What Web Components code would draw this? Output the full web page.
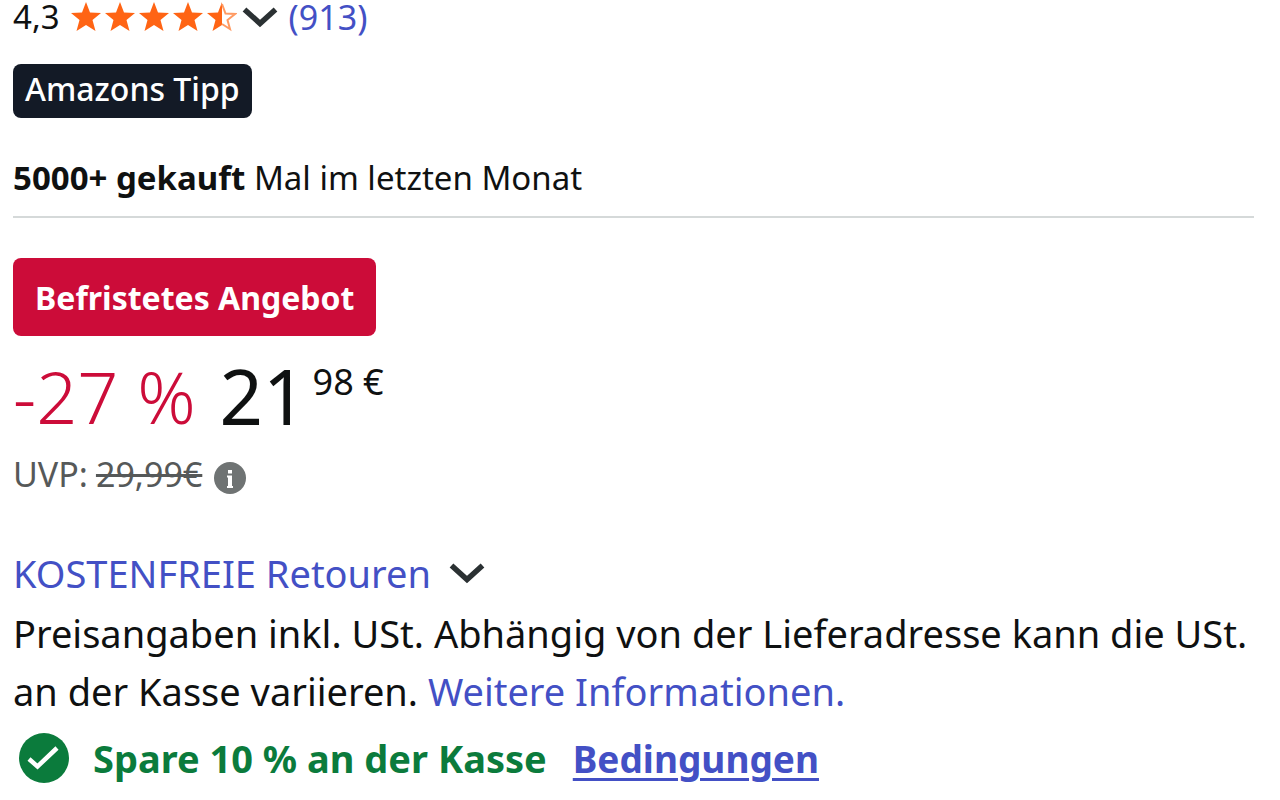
<!DOCTYPE html>
<html lang="de">
<head>
<meta charset="utf-8">
<meta name="viewport" content="width=device-width, initial-scale=1">
<title>Produktangebot</title>
<style>
  body { margin: 0; background: #fff; color: #0f1111; font-family: "Noto Sans", "Open Sans", sans-serif; }
</style>
</head>
<body>
<product-offer></product-offer>
<script>
const define = (name, html) => {
  const template = document.createElement('template');
  template.innerHTML = html;
  customElements.define(name, class extends HTMLElement {
    constructor() {
      super();
      this.attachShadow({ mode: 'open' }).append(template.content.cloneNode(true));
    }
  });
};

define('chevron-icon', `
  <style>
    :host { display: inline-flex; }
    svg { width: 36px; height: 22px; display: block; }
  </style>
  <svg viewBox="0 0 36 22" aria-hidden="true"><path d="M2.500 3.500L18 17.500L33.500 3.500" fill="none" stroke="#2b3133" stroke-width="5.500"/></svg>`);

define('star-rating', `
  <style>
    :host { display: flex; align-items: center; height: 34px; font-size: 33px; line-height: 34px; }
    .stars { width: 166px; height: 32px; margin-left: 11px; }
    button { display: flex; align-items: center; padding: 0; border: 0; background: none; font: inherit; color: inherit; }
    chevron-icon { margin-left: 5px; }
    a { margin-left: 11px; color: #4350c5; font-size: 34px; text-decoration: none; }
  </style>
  <button type="button" aria-label="4,3 von 5 Sternen">
    <span>4,3</span>
    <svg class="stars" viewBox="0 0 166 32">
      <defs>
        <path id="star" d="M15 1L19 11.500L30 12L21.500 19L24.500 30L15 24L5.500 30L8.500 19L0 12L11 11.500Z"/>
      </defs>
      <g fill="#ff6414">
        <use href="#star"/><use href="#star" x="34"/><use href="#star" x="68"/><use href="#star" x="102"/>
        <path d="M151 1V24L141.500 30L144.500 19L136 12L147 11.500Z"/>
      </g>
      <path d="M151 3L154.500 12.500L164 13L156.500 19L159 28L151 23" fill="none" stroke="#ff9a62" stroke-width="2"/>
    </svg>
    <chevron-icon></chevron-icon>
  </button>
  <a href="#reviews"><slot></slot></a>`);

define('offer-badge', `
  <style>
    :host { display: flex; width: fit-content; box-sizing: border-box; border-radius: 8px; color: #fff; white-space: nowrap; }
    :host([kind="tip"]) { height: 54px; padding: 0 12px; background: #131a26; font-size: 32px; line-height: 50px; font-weight: 500; }
    :host([kind="deal"]) { height: 78px; padding: 0 22px; background: #cc0c39; font-size: 32px; line-height: 80px; font-weight: 700; }
  </style>
  <slot></slot>`);

define('price-block', `
  <style>
    :host { display: block; }
    .price { display: flex; height: 76px; line-height: 76px; }
    .saving { color: #cc0c39; font-size: 72px; font-weight: 300; }
    .whole { margin-left: 24px; font-size: 76px; }
    .cents { margin-left: 6px; font-size: 36px; line-height: 48px; }
    .list { display: flex; align-items: center; height: 48px; margin-top: 16px; color: #565959; font-size: 34px; }
    s { margin-left: 8px; text-decoration-thickness: 3px; }
    button { display: flex; margin: 8px 0 0 12px; padding: 0; border: 0; background: none; }
    svg { width: 32px; height: 32px; }
  </style>
  <div class="price">
    <span class="saving">-27 %</span><span class="whole">21</span><span class="cents">98 €</span>
  </div>
  <div class="list">
    <span>UVP:</span><s>29,99€</s>
    <button type="button" aria-label="Information zur UVP">
      <svg viewBox="0 0 32 32"><circle cx="16" cy="16" r="16" fill="#6f7373"/><path d="M14 8h4v3.500h-4zM13 13.500H18V24h1v2h-6v-2h1v-8.500h-1z" fill="#fff"/></svg>
    </button>
  </div>`);

define('coupon-line', `
  <style>
    :host { display: flex; align-items: center; height: 56px; padding-left: 6px; font-size: 38px; font-weight: 700; white-space: nowrap; }
    svg { width: 50px; height: 50px; margin-right: 24px; }
    .text { color: #0b7b3c; }
    a { margin-left: 26px; color: #4350c5; font-size: 37px; text-decoration-thickness: 3px; text-underline-offset: 5px; }
  </style>
  <svg viewBox="0 0 50 50" aria-hidden="true"><circle cx="25" cy="25" r="25" fill="#0b7b3c"/><path d="M10 26L18.500 33.500L38 15" fill="none" stroke="#fff" stroke-width="4.500"/></svg>
  <span class="text"><slot></slot></span>
  <a href="#terms">Bedingungen</a>`);

define('product-offer', `
  <style>
    :host { display: block; padding: 0 26px 10px 13px; }
    offer-badge[kind="tip"] { margin-top: 30px; }
    .bought { margin: 36px 0 0; font-size: 33px; line-height: 48px; }
    hr { margin: 14px 0 40px; border: 0; border-top: 2px solid #d5d9d9; }
    price-block { margin-top: 22px; }
    .returns { display: flex; align-items: center; gap: 18px; height: 58px; margin-top: 46px; font-size: 38px; }
    a { color: #4350c5; text-decoration: none; }
    .tax { margin: 2px -13px 10px 0; font-size: 38px; line-height: 58px; }
  </style>
  <star-rating>(913)</star-rating>
  <offer-badge kind="tip">Amazons Tipp</offer-badge>
  <p class="bought"><b>5000+ gekauft</b> Mal im letzten Monat</p>
  <hr>
  <offer-badge kind="deal">Befristetes Angebot</offer-badge>
  <price-block></price-block>
  <div class="returns"><a href="#returns">KOSTENFREIE Retouren</a><chevron-icon></chevron-icon></div>
  <p class="tax">Preisangaben inkl. USt. Abhängig von der Lieferadresse kann die USt. an der Kasse variieren. <a href="#info">Weitere Informationen.</a></p>
  <coupon-line>Spare 10 % an der Kasse</coupon-line>`);
</script>
</body>
</html>
